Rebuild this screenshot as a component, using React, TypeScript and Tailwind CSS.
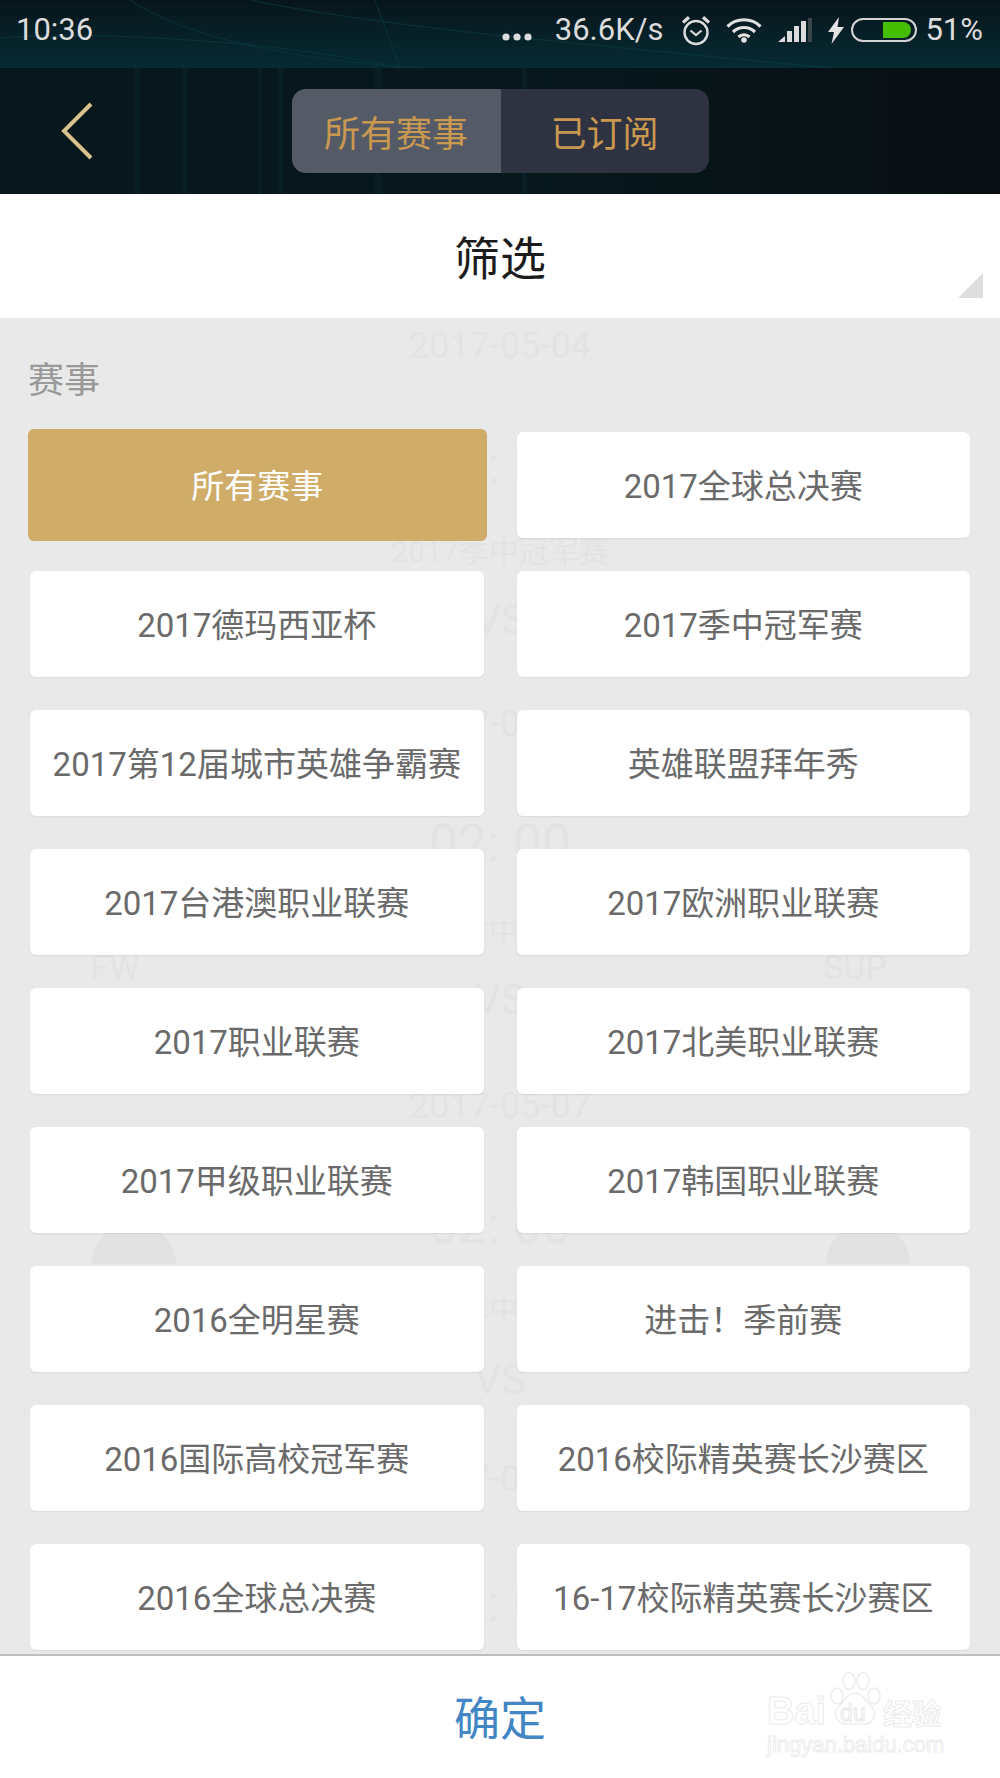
const leagues = [
  '2017全球总决赛',
  '2017德玛西亚杯',
  '2017季中冠军赛',
  '2017第12届城市英雄争霸赛',
  '英雄联盟拜年秀',
  '2017台港澳职业联赛',
  '2017欧洲职业联赛',
  '2017职业联赛',
  '2017北美职业联赛',
  '2017甲级职业联赛',
  '2017韩国职业联赛',
  '2016全明星赛',
  '进击！季前赛',
  '2016国际高校冠军赛',
  '2016校际精英赛长沙赛区',
  '2016全球总决赛',
  '16-17校际精英赛长沙赛区',
];

// what shows faintly through the scrim: [text, center x, center y, size]
const ghostTexts: [string, number, number, number][] = [
  ['2017-05-04', 500, 27, 36],
  ['02: 00', 500, 147, 52],
  ['2017季中冠军赛', 500, 232, 30],
  ['VS', 500, 300, 42],
  ['2017-05-05', 500, 405, 36],
  ['02: 00', 500, 525, 52],
  ['2017季中冠军赛', 500, 612, 30],
  ['FW', 115, 648, 34],
  ['SUP', 855, 648, 34],
  ['VS', 500, 680, 42],
  ['2017-05-07', 500, 787, 36],
  ['02: 00', 500, 907, 52],
  ['2017季中冠军赛', 500, 990, 30],
  ['VS', 500, 1060, 42],
  ['2017-05-08', 500, 1160, 36],
  ['02: 00', 500, 1285, 52],
];

function MoreDots() {
  return (
    <svg width="30" height="8" viewBox="0 0 30 8" className="fill-[#dcdcdc]">
      <circle cx="4" cy="4" r="3.6" />
      <circle cx="15" cy="4" r="3.6" />
      <circle cx="26" cy="4" r="3.6" />
    </svg>
  );
}

function AlarmIcon() {
  return (
    <svg width="30" height="31" viewBox="0 0 30 31" fill="none" stroke="#dcdcdc">
      <circle cx="15" cy="17.5" r="11.5" strokeWidth="2.4" />
      <path d="M9.500 15.500l5.500 4.500 5.500-4.500" strokeWidth="2.2" />
      <path d="M2 7.500L8 2.200M28 7.500L22 2.200" strokeWidth="3.2" />
    </svg>
  );
}

function WifiIcon() {
  return (
    <svg width="36" height="26" viewBox="0 0 36 26" fill="none" stroke="#e2e2e2" strokeWidth="3.2">
      <path d="M1.500 9.500C10.500 0.500 25.500 0.500 34.500 9.500" />
      <path d="M7 15C13 9 23 9 29 15" />
      <path d="M12.500 20C15.500 17 20.500 17 23.500 20" />
      <circle cx="18" cy="23" r="2.800" fill="#e2e2e2" stroke="none" />
    </svg>
  );
}

function SignalIcon() {
  return (
    <svg width="34" height="24" viewBox="0 0 34 24">
      <path d="M0 24L7 18V24Z" fill="#dcdcdc" />
      <rect x="9" y="13" width="5" height="11" fill="#dcdcdc" />
      <rect x="16" y="8" width="5" height="16" fill="#dcdcdc" />
      <rect x="23" y="3" width="5" height="21" fill="#dcdcdc" />
      <rect x="30" y="0" width="4" height="24" fill="#3a4549" />
    </svg>
  );
}

function BatteryIcon() {
  return (
    <div className="flex items-center">
      <svg width="16" height="27" viewBox="0 0 16 27" className="fill-[#e2e2e2] mr-[7px]">
        <path d="M11 0L0 15H6L3.500 27L16 10H9.500Z" />
      </svg>
      <svg width="66" height="24" viewBox="0 0 66 24">
        <rect x="1" y="1" width="64" height="22" rx="11" fill="none" stroke="#d4d4d4" strokeWidth="2" />
        <path d="M32 4H52A8 8 0 0 1 52 20H32Z" fill="#45bd00" />
      </svg>
    </div>
  );
}

function Backdrop() {
  return (
    <svg className="absolute inset-0 w-full h-full" viewBox="0 0 1000 194" preserveAspectRatio="none">
      <defs>
        <linearGradient id="statusFade" x1="0" y1="0" x2="0" y2="1">
          <stop offset="0" stopColor="#07151b" />
          <stop offset="1" stopColor="#062b33" />
        </linearGradient>
        <linearGradient id="navFade" x1="0" y1="0" x2="1" y2="0">
          <stop offset="0" stopColor="#07171c" />
          <stop offset="0.55" stopColor="#07181d" />
          <stop offset="1" stopColor="#080e11" />
        </linearGradient>
      </defs>
      <rect width="1000" height="68" fill="url(#statusFade)" />
      <rect y="68" width="1000" height="126" fill="url(#navFade)" />
      <g fill="none" stroke="#0c3f47" strokeWidth="1.2" opacity="0.55">
        <path d="M130 0C190 40 300 60 420 68" />
        <path d="M250 0C400 30 600 45 830 68" />
        <path d="M0 38C120 30 300 45 400 68" />
        <path d="M375 0L400 68" />
      </g>
      <g fill="#0b3138" opacity="0.28">
        <rect x="134" y="68" width="6" height="126" />
        <rect x="182" y="68" width="5" height="126" />
        <rect x="258" y="68" width="4" height="126" />
        <rect x="278" y="68" width="5" height="126" />
        <rect x="375" y="68" width="7" height="126" />
        <rect x="522" y="68" width="5" height="126" />
      </g>
    </svg>
  );
}

function Watermark() {
  return (
    <div className="absolute left-[767px] top-[1671px] w-[180px] h-[88px] pointer-events-none">
      <svg className="absolute left-[60px] top-0" width="56" height="56" viewBox="0 0 56 56" fill="#ffffff" stroke="#ececec" strokeWidth="1.4">
        <ellipse cx="10" cy="25" rx="6" ry="8" />
        <ellipse cx="22" cy="10" rx="6" ry="8.500" />
        <ellipse cx="36" cy="10" rx="6" ry="8.500" />
        <ellipse cx="47" cy="25" rx="6" ry="8" />
        <path d="M28 22C36 22 38 30 44 35C51 41 47 54 36 53C31 52.600 25 52.600 20 53C9 54 5 41 12 35C18 30 20 22 28 22Z" />
      </svg>
      <span className="absolute left-0 top-[20px] text-[38px] leading-[40px] font-bold text-white [-webkit-text-stroke:1px_#ececec] font-['Liberation_Sans',sans-serif]">
        Bai
      </span>
      <span className="absolute left-[73px] top-[30px] text-[23px] leading-[24px] text-white [-webkit-text-stroke:1px_#e8e8e8] font-['Liberation_Sans',sans-serif]">
        du
      </span>
      <span className="absolute left-[116px] top-[23px] text-[29px] leading-[36px] font-bold text-white [-webkit-text-stroke:1px_#ececec] font-['Noto_Sans_CJK_SC',sans-serif]">
        经验
      </span>
      <span className="absolute left-0 top-[61px] text-[22px] leading-[26px] text-white [-webkit-text-stroke:1px_#ececec] font-['Liberation_Sans',sans-serif]">
        jingyan.baidu.com
      </span>
    </div>
  );
}

export default function App() {
  return (
    <div className="relative w-[1000px] h-[1778px] overflow-hidden bg-white font-['Roboto','Noto_Sans_CJK_SC',sans-serif]">
      <div className="relative h-[194px] overflow-hidden">
        <Backdrop />
        <div className="relative flex items-center h-[68px] pb-[8px] pl-[16px] pr-[17px] text-[#dcdcdc] text-[31px] leading-[36px]">
          <span>10:36</span>
          <div className="ml-auto flex items-center">
            <div className="mt-[14px]"><MoreDots /></div>
            <span className="ml-[23px] mr-[18px]">36.6K/s</span>
            <AlarmIcon />
            <div className="ml-[15px]"><WifiIcon /></div>
            <div className="ml-[16px]"><SignalIcon /></div>
            <div className="ml-[16px]"><BatteryIcon /></div>
            <span className="ml-[8px]">51%</span>
          </div>
        </div>
        <div className="relative h-[126px] flex items-center justify-center">
          <svg className="absolute left-[60px] top-[33px]" width="34" height="60" viewBox="0 0 34 60" fill="none" stroke="#d9c28c" strokeWidth="4">
            <path d="M31 3L4 30L31 57" />
          </svg>
          <div className="flex w-[417px] h-[84px] rounded-[14px] overflow-hidden text-[36px] text-[#c9994f] font-['Noto_Sans_CJK_SC',sans-serif]">
            <div className="w-[209px] flex items-center justify-center bg-[#555a67]">所有赛事</div>
            <div className="flex-1 flex items-center justify-center bg-[#2e3241]">已订阅</div>
          </div>
        </div>
      </div>

      <div className="h-[125px] pb-[2px] flex items-center justify-center border-b border-[#e6e6e6] relative text-[46px] text-[#1c1c1c] font-['Noto_Sans_CJK_SC',sans-serif]">
        筛选
        <svg className="absolute left-[958px] top-[79px]" width="25" height="25" viewBox="0 0 25 25">
          <path d="M25 0V25H0Z" fill="#dedede" />
        </svg>
      </div>

      <div className="relative h-[1335px] overflow-hidden bg-[#e9e9e9] px-[30px] pt-[34px]">
        {ghostTexts.map(([text, x, y, size], i) => (
          <span
            key={i}
            className="absolute -translate-x-1/2 -translate-y-1/2 whitespace-nowrap text-[#e3e3e3]"
            style={{ left: x, top: y, fontSize: size }}
          >
            {text}
          </span>
        ))}
        <div className="absolute left-[92px] top-[905px] w-[84px] h-[40px] rounded-t-[42px] bg-[#e1e1e1]" />
        <div className="absolute left-[826px] top-[905px] w-[84px] h-[40px] rounded-t-[42px] bg-[#e1e1e1]" />

        <div className="relative text-[36px] leading-[48px] text-[#999999] font-['Noto_Sans_CJK_SC',sans-serif] -ml-[2px]">赛事</div>
        <div className="relative grid grid-cols-2 gap-x-[33px] gap-y-[33px] mt-[31px] text-[33px] text-[#6a6a6a]">
          <div className="h-[112px] pt-[4px] -my-[3px] -ml-[2px] -mr-[3px] flex items-center justify-center rounded-[6px] bg-[#cfac67] text-white">
            所有赛事
          </div>
          {leagues.map(name => (
            <div
              key={name}
              className="h-[106px] pt-[4px] flex items-center justify-center rounded-[6px] bg-white whitespace-nowrap shadow-[0_1px_2px_rgba(0,0,0,0.07)]"
            >
              {name}
            </div>
          ))}
        </div>
      </div>

      <div className="h-[124px] pb-[4px] border-t-2 border-[#bdbdbd] bg-white flex items-center justify-center text-[46px] text-[#4286c5] font-['Noto_Sans_CJK_SC',sans-serif]">
        确定
      </div>
      <Watermark />
    </div>
  );
}
